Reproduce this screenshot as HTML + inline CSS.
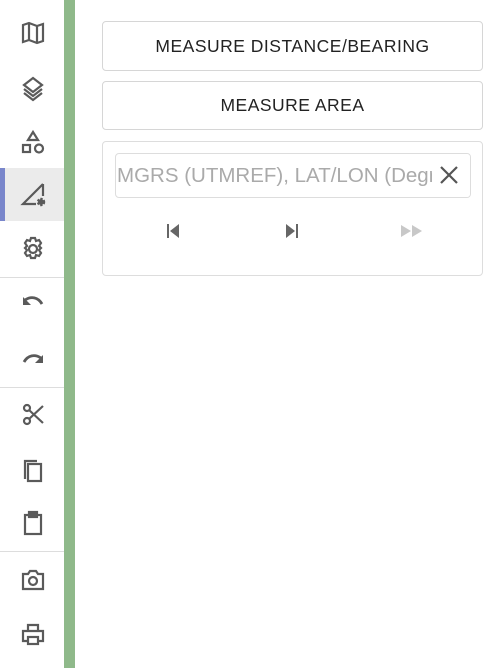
<!DOCTYPE html>
<html><head><meta charset="utf-8"><style>
*{box-sizing:border-box;margin:0;padding:0}
body{width:500px;height:668px;background:#fff;position:relative;overflow:hidden;font-family:"Liberation Sans",Roboto,sans-serif}
.side{position:absolute;left:0;top:0;width:64px;height:668px;background:#fff}
.green{position:absolute;left:64px;top:0;width:11px;height:668px;background:#8fb98a}
.ic{position:absolute;left:19px;width:28px;height:28px}
.hr{position:absolute;left:0;width:64px;height:1px;background:#ddd}
.btn{position:absolute;left:102px;width:381px;border:1px solid #d6d6d6;border-radius:4px;text-align:center;font-size:17.5px;color:#222;letter-spacing:.5px}
svg{fill:none;stroke:#5a5a5a;stroke-width:2.2}
</style></head><body>
<div class="side">
<div style="position:absolute;left:0;top:168px;width:64px;height:53px;background:#ebebeb"></div>
<div style="position:absolute;left:0;top:168px;width:5px;height:53px;background:#7986cb"></div>
<svg class="ic" style="top:19px" viewBox="0 0 28 28"><path d="M4 6l6-2 8 3 6-2v17l-6 2-8-3-6 2z M10 4v17 M18 7v17"/></svg>
<svg class="ic" style="top:74px" viewBox="0 0 28 28"><path d="M14 4l9 7-9 7-9-7z M5 15l9 7 9-7 M5 19l9 7 9-7"/></svg>
<svg class="ic" style="top:128px" viewBox="0 0 28 28"><path d="M14 4l5 8h-10z"/><rect x="4" y="17" width="7" height="7"/><circle cx="20" cy="20.5" r="4"/></svg>
<svg class="ic" style="top:180px" viewBox="0 0 28 28"><path d="M24 4L4 24h13 M24 4v12"/><circle cx="22" cy="22" r="3" fill="#5a5a5a" stroke-dasharray="2 1.3" stroke-width="2.5"/></svg>
<svg class="ic" style="top:235px" viewBox="0 0 28 28"><circle cx="14" cy="14" r="4"/><path d="M12 3h4l1 3 3-1 2 3-2 3 2 2v0l-2 2 2 3-2 3-3-1-1 3h-4l-1-3-3 1-2-3 2-3-2-2 2-2-2-3 2-3 3 1z"/></svg>
<div class="hr" style="top:277px"></div>
<svg class="ic" style="top:290px" viewBox="0 0 28 28"><path d="M6 10c6-4 13-3 17 4" stroke-width="2.8"/><path d="M4 7v8h8z" fill="#5a5a5a" stroke="none"/></svg>
<svg class="ic" style="top:346px" viewBox="0 0 28 28"><path d="M22 12c-6-4-13-3-17 4" stroke-width="2.8"/><path d="M24 9v8h-8z" fill="#5a5a5a" stroke="none"/></svg>
<div class="hr" style="top:387px"></div>
<svg class="ic" style="top:400px" viewBox="0 0 28 28"><circle cx="8" cy="8" r="3"/><circle cx="8" cy="21" r="3"/><path d="M10 10l14 13 M10 19l14-13"/></svg>
<svg class="ic" style="top:455px" viewBox="0 0 28 28"><path d="M6 24V6h12"/><rect x="9" y="9" width="13" height="17"/></svg>
<svg class="ic" style="top:509px" viewBox="0 0 28 28"><rect x="6" y="6" width="16" height="19"/><rect x="10" y="3" width="8" height="5" fill="#5a5a5a"/></svg>
<div class="hr" style="top:551px"></div>
<svg class="ic" style="top:565px" viewBox="0 0 28 28"><path d="M4 9h5l2-3h6l2 3h5v15h-20z"/><circle cx="14" cy="16" r="4"/></svg>
<svg class="ic" style="top:620px" viewBox="0 0 28 28"><path d="M9 10V5h10v5 M8 21H4V11h20v10h-4"/><rect x="9" y="17" width="10" height="7"/></svg>
</div>
<div class="green"></div>
<div class="btn" style="top:21px;height:50px;line-height:48px">MEASURE DISTANCE/BEARING</div>
<div class="btn" style="top:81px;height:49px;line-height:47px">MEASURE AREA</div>
<div style="position:absolute;left:102px;top:141px;width:381px;height:135px;border:1px solid #ddd;border-radius:4px"></div>
<div style="position:absolute;left:115px;top:153px;width:356px;height:45px;border:1px solid #ddd;border-radius:4px;overflow:hidden;font-size:20.5px;color:#aaa;line-height:43px;padding-left:1px;white-space:nowrap;background:#fff">MGRS (UTMREF), LAT/LON (Degrees)<span style="position:absolute;left:316px;top:0;width:39px;height:43px;background:#fff"></span></div>
<svg style="position:absolute;left:439px;top:165px;width:20px;height:20px;stroke:#555;stroke-width:2.2" viewBox="0 0 20 20"><path d="M2 2l16 16M18 2L2 18"/></svg>
<svg style="position:absolute;left:165px;top:223px;width:16px;height:16px;stroke:none;fill:#666" viewBox="0 0 16 16"><rect x="2" y="1" width="2" height="14"/><path d="M14 1v14L5 8z"/></svg>
<svg style="position:absolute;left:284px;top:223px;width:16px;height:16px;stroke:none;fill:#666" viewBox="0 0 16 16"><rect x="12" y="1" width="2" height="14"/><path d="M2 1v14L11 8z"/></svg>
<svg style="position:absolute;left:400px;top:223px;width:24px;height:16px;stroke:none;fill:#c8c8c8" viewBox="0 0 24 16"><path d="M1 2v12l10-6z M12 2v12l10-6z"/></svg>
</body></html>
